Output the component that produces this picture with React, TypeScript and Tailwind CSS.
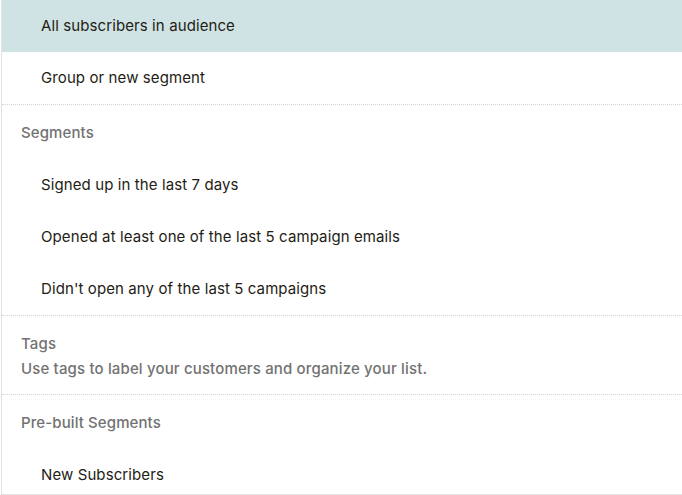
import React from "react";

const Item = ({ label, active = false }: { label: string; active?: boolean }) => (
  <div
    className={`h-[52px] flex items-center pl-[39px] text-[15px] tracking-[0.1px] text-[#241c15] ${
      active ? "bg-[#cfe3e4]" : ""
    }`}
  >
    {label}
  </div>
);

const Header = ({ label }: { label: string }) => (
  <div className="h-[54px] pt-[16px] pl-[19px] text-[15px] leading-[24px] font-medium tracking-[0.1px] text-[#727272]">
    {label}
  </div>
);

const Divider = () => <div className="border-t border-dotted border-[#d4d4d4]" />;

export default function App() {
  return (
    <div
      className="w-[682px] h-[495px] bg-white pl-[1px] overflow-hidden"
      style={{ fontFamily: "Inter, 'Open Sans', sans-serif" }}
    >
      <div className="h-full border-l border-b border-[#e3e3e3] overflow-hidden">
        <Item label="All subscribers in audience" active />
        <Item label="Group or new segment" />
        <Divider />
        <Header label="Segments" />
        <Item label="Signed up in the last 7 days" />
        <Item label="Opened at least one of the last 5 campaign emails" />
        <Item label="Didn't open any of the last 5 campaigns" />
        <Divider />
        <div className="pt-[16px] pb-[12px] pl-[19px] text-[15px] font-medium tracking-[0.15px] text-[#727272]">
          <div className="leading-[24px]">Tags</div>
          <div className="leading-[26px]">Use tags to label your customers and organize your list.</div>
        </div>
        <Divider />
        <Header label="Pre-built Segments" />
        <Item label="New Subscribers" />
      </div>
    </div>
  );
}
